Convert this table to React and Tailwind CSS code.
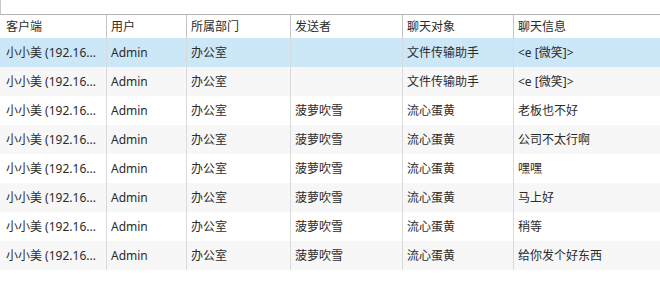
import React from "react";

const cols = ["w-[106px]", "w-[80px]", "w-[104px]", "w-[112px]", "w-[111px]", "flex-1"];
const headers = ["客户端", "用户", "所属部门", "发送者", "聊天对象", "聊天信息"];
const rows = [
  ["", "文件传输助手", "<e [微笑]>"],
  ["", "文件传输助手", "<e [微笑]>"],
  ["菠萝吹雪", "流心蛋黄", "老板也不好"],
  ["菠萝吹雪", "流心蛋黄", "公司不太行啊"],
  ["菠萝吹雪", "流心蛋黄", "嘿嘿"],
  ["菠萝吹雪", "流心蛋黄", "马上好"],
  ["菠萝吹雪", "流心蛋黄", "稍等"],
  ["菠萝吹雪", "流心蛋黄", "给你发个好东西"],
];

export default function App() {
  return (
    <div
      className="w-[660px] h-[294px] bg-white overflow-hidden text-[12px] text-[#2b2b2b]"
      style={{ fontFamily: '"Noto Sans", "Noto Sans CJK SC", sans-serif' }}
    >
      <div className="h-[14px] border-l border-[#c8c8c8]" />
      <div className="flex h-[24px] border-t border-[#b4b4b4] bg-white">
        {headers.map((h, i) => (
          <div
            key={i}
            className={`${cols[i]} shrink-0 flex items-center ${i === 0 ? "pl-[6px]" : "pl-[4px] border-l border-[#c4c4c4]"}`}
          >
            {h}
          </div>
        ))}
      </div>
      {rows.map((r, idx) => {
        const bg = idx === 0 ? "bg-[#cce8f8]" : idx % 2 === 1 ? "bg-[#f7f7f7]" : "bg-white";
        const cells = ["小小美 (192.16...", "Admin", "办公室", r[0], r[1], r[2]];
        return (
          <div key={idx} className={`flex h-[29px] ${bg}`}>
            {cells.map((c, i) => (
              <div
                key={i}
                className={`${cols[i]} shrink-0 flex items-center whitespace-nowrap overflow-hidden ${i === 0 ? "pl-[6px]" : "pl-[4px] border-l border-[#dadada]"}`}
              >
                {c}
              </div>
            ))}
          </div>
        );
      })}
    </div>
  );
}
